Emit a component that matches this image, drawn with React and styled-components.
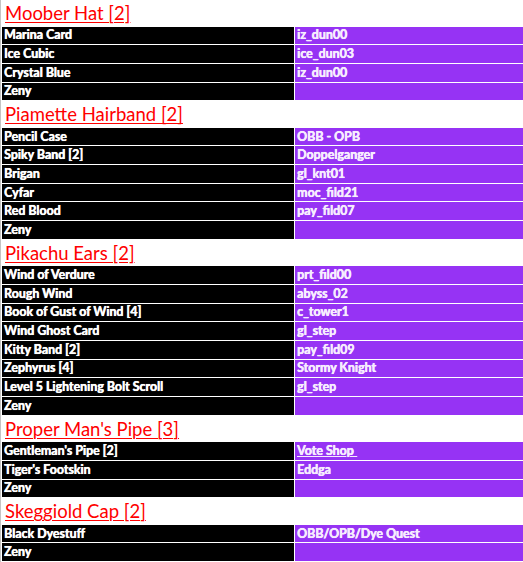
import React from "react";
import styled, { createGlobalStyle } from "styled-components";

const GlobalStyle = createGlobalStyle`
  html, body {
    margin: 0;
    padding: 0;
    background: #ffffff;
  }
  body {
    font-family: Lato, "Liberation Sans", sans-serif;
  }
`;

const recipes = [
  {
    title: "Moober Hat [2]",
    items: [
      ["Marina Card", "iz_dun00"],
      ["Ice Cubic", "ice_dun03"],
      ["Crystal Blue", "iz_dun00"],
      ["Zeny", ""],
    ],
  },
  {
    title: "Piamette Hairband [2]",
    items: [
      ["Pencil Case", "OBB - OPB"],
      ["Spiky Band [2]", "Doppelganger"],
      ["Brigan", "gl_knt01"],
      ["Cyfar", "moc_fild21"],
      ["Red Blood", "pay_fild07"],
      ["Zeny", ""],
    ],
  },
  {
    title: "Pikachu Ears [2]",
    items: [
      ["Wind of Verdure", "prt_fild00"],
      ["Rough Wind", "abyss_02"],
      ["Book of Gust of Wind [4]", "c_tower1"],
      ["Wind Ghost Card", "gl_step"],
      ["Kitty Band [2]", "pay_fild09"],
      ["Zephyrus [4]", "Stormy Knight"],
      ["Level 5 Lightening Bolt Scroll", "gl_step"],
      ["Zeny", ""],
    ],
  },
  {
    title: "Proper Man's Pipe [3]",
    items: [
      ["Gentleman's Pipe [2]", "Vote Shop ", true],
      ["Tiger's Footskin", "Eddga"],
      ["Zeny", ""],
    ],
  },
  {
    title: "Skeggiold Cap [2]",
    items: [
      ["Black Dyestuff", "OBB/OPB/Dye Quest"],
      ["Zeny", ""],
    ],
  },
];

const App = () => {
  return (
    <>
      <GlobalStyle />
      <Sheet>
        {recipes.map((recipe) => (
          <Section key={recipe.title}>
            <Title>{recipe.title}</Title>
            {recipe.items.map(([name, where, link], idx) => (
              <Row key={idx}>
                <NameCell>{name}</NameCell>
                <WhereCell $link={link}>{where}</WhereCell>
              </Row>
            ))}
          </Section>
        ))}
      </Sheet>
    </>
  );
};

const Sheet = styled.div`
  display: flex;
  flex-direction: column;
  border-left: 1px solid #c4c4c4;
  padding-left: 1px;
  width: 521px;
`;

const Section = styled.div`
  display: flex;
  flex-direction: column;
`;

const Title = styled.div`
  height: 26.6px;
  box-sizing: border-box;
  padding: 4px 0 0 3px;
  font-size: 18.5px;
  line-height: 1;
  color: #ff0000;
  text-decoration: underline;
  text-decoration-thickness: 1px;
  text-underline-offset: 2px;
  white-space: nowrap;
`;

const Row = styled.div`
  display: grid;
  grid-template-columns: 292px 1fr;
  column-gap: 1px;
  height: 18.67px;
  box-sizing: border-box;
  border-bottom: 1px solid #ffffff;
`;

const Cell = styled.div`
  box-sizing: border-box;
  padding: 0.8px 0 0 2px;
  font-size: 12.4px;
  font-weight: 700;
  line-height: 16.8px;
  color: #ffffff;
  white-space: nowrap;
  overflow: hidden;
  text-shadow: 0.35px 0 0 #ffffff, 0 0 1px rgba(255, 255, 255, 0.5);
`;

const NameCell = styled(Cell)`
  background: #000000;
`;

const WhereCell = styled(Cell)`
  background: #9633f4;
  color: #f6ecff;
  text-decoration: ${(p) => (p.$link ? "underline" : "none")};
  white-space: pre;
`;

export default App;
